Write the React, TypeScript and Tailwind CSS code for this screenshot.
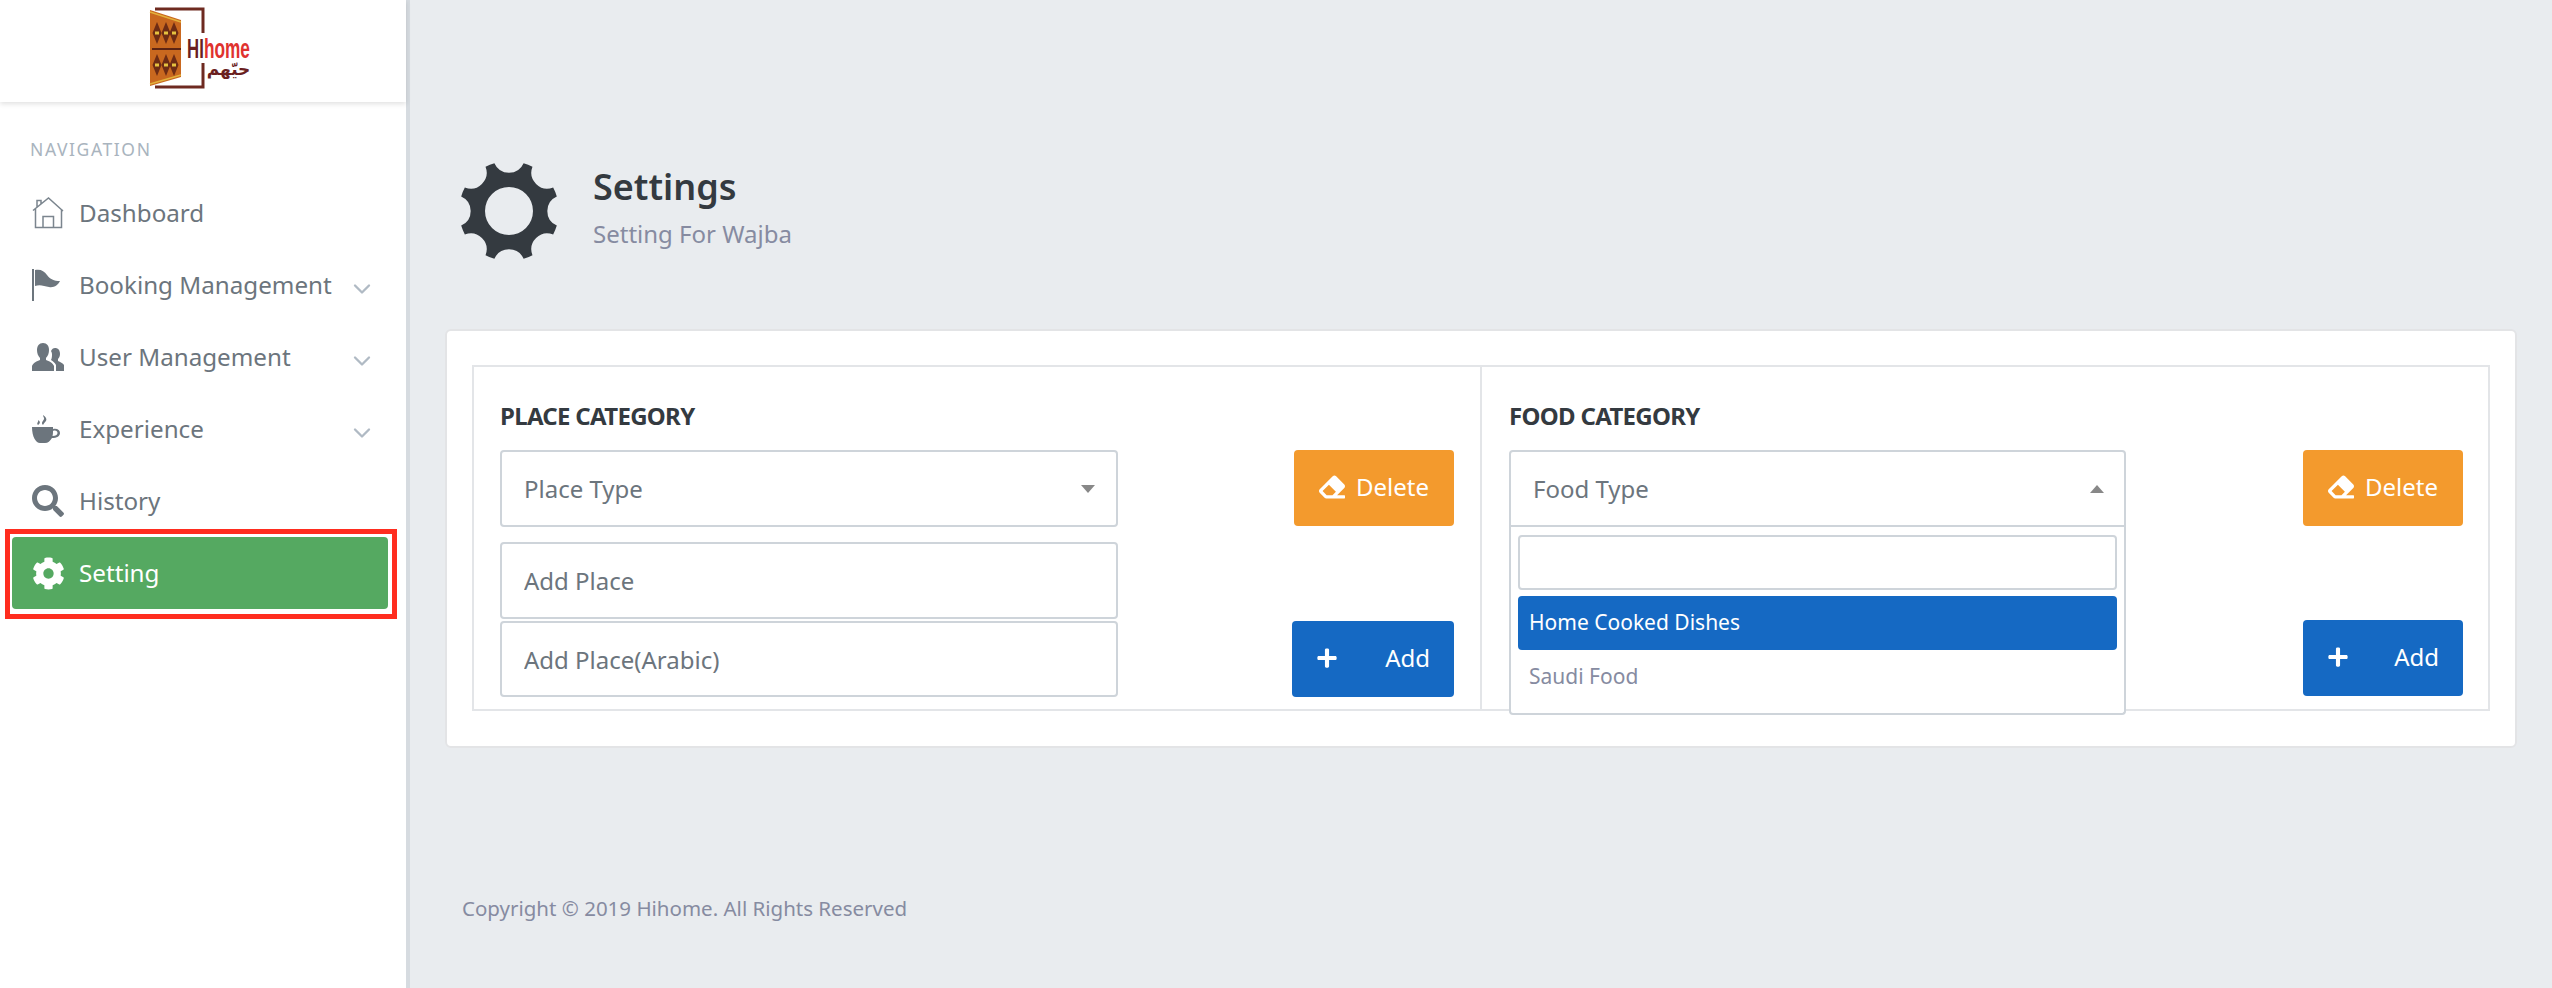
import React from 'react';
import { ChevronDown } from 'lucide-react';
import { FaCog, FaEraser, FaPlus, FaSearch } from 'react-icons/fa';

const gearPath = () => {
  const R = 50;
  const pt = (deg: number) => {
    const a = ((deg - 90) * Math.PI) / 180;
    return `${(R * Math.cos(a)).toFixed(2)} ${(R * Math.sin(a)).toFixed(2)}`;
  };
  let d = `M${pt(-17)}`;
  for (let i = 0; i < 8; i++) {
    const t = i * 45;
    d += ` A16 16 0 0 0 ${pt(t + 17)} A50 50 0 0 1 ${pt(t + 28)}`;
  }
  return `${d} Z M24 0 A24 24 0 1 0 -24 0 A24 24 0 1 0 24 0 Z`;
};

const HomeIcon = () => (
  <svg width="32" height="32" viewBox="0 0 32 32" fill="none" stroke="#7b858e" strokeWidth="1.5">
    <path d="M1 13.5 16.5 1 31 14M5 10V3.500h4v3.500M3.500 12v18.500h26V12M11 30.500V19.500h10.500v11" />
  </svg>
);

const FlagIcon = () => (
  <svg width="28" height="32" viewBox="0 0 28 32" fill="#6c757d">
    <rect x="0" y="0" width="2" height="32" />
    <path d="M3 1c6-1 9 1 12 5s7 6 13 6c-2 4-6 7-11 6s-9-3-14-1z" />
  </svg>
);

const UsersIcon = () => (
  <svg width="32" height="28" viewBox="0 0 32 28" fill="#6c757d">
    <path d="M11 0c4 0 6 3 6 7 0 3-1 6-3 8v2c3 1 7 3 8 6v5H0v-5c1-3 5-5 8-6v-2C6 13 5 10 5 7c0-4 2-7 6-7z" />
    <path d="M23 5c3 0 5 2 5 6 0 2-1 4-2 5v2c2 1 5 2 6 4v6h-8v-6c-1-2-3-4-5-5 1-2 1-4 1-6 0-1-.5-2-1-3 1-2 2-3 4-3z" />
  </svg>
);

const CupIcon = () => (
  <svg width="28" height="28" viewBox="0 0 28 28" fill="#6c757d">
    <path d="M0 12h21v2c4-1 7 1 7 4s-3 5-8 5c-2 3-4 5-7 5H8c-4 0-8-6-8-16zm21 4c0 2 0 3-.5 5 3 0 5-1 5-3s-2-3-4.500-2z" fillRule="evenodd" />
    <path d="M11 10c-3-3 2-5 1-7-.3-1-1-2-1-3 3 2 4 4 3 6-1 1-2 2-3 4zM6 10c-2-2 1-3 0-5 2 1 3 3 0 5z" />
  </svg>
);

// coordinates in the viewBox are the page's own pixels
const Logo = () => (
  <svg width="104" height="92" viewBox="148 0 104 92" className="ml-[148px]">
    <path d="M155 9h48v24M203 63v24h-48" fill="none" stroke="#6e2a20" strokeWidth="3" />
    <path d="M150 10 181 20v57L150 86z" fill="#c9681f" />
    <path d="M150 12 181 22M150 84 181 75" stroke="#e2b13c" strokeWidth="1.5" />
    <path d="M152 49h29" stroke="#5d2413" strokeWidth="2" />
    {[157, 166, 174].map(x => (
      <g key={x}>
        <path d={`M${x} 22l4.500 11-4.500 11-4.500-11z`} fill="#6e2c14" />
        <path d={`M${x} 54l4.500 11-4.500 11-4.500-11z`} fill="#6e2c14" />
        <rect x={x - 2} y="31.500" width="4" height="3" fill="#e6c23f" />
        <rect x={x - 2} y="63.500" width="4" height="3" fill="#e6c23f" />
      </g>
    ))}
    <text transform="translate(187 58) scale(0.6 1)" fontFamily="'Liberation Sans', sans-serif" fontWeight="700" fontSize="28" fill="#6b1f1f">HI</text>
    <text transform="translate(204 58) scale(0.615 1)" fontFamily="'Liberation Sans', sans-serif" fontWeight="700" fontSize="28" fill="#e0322f">home</text>
    <text x="228.500" y="75" textAnchor="middle" fontFamily="'DejaVu Sans', sans-serif" fontWeight="700" fontSize="17" fill="#6b1f1f">حيّهم</text>
  </svg>
);

const navItems = [
  { label: 'Dashboard', icon: <HomeIcon /> },
  { label: 'Booking Management', icon: <FlagIcon />, sub: true },
  { label: 'User Management', icon: <UsersIcon />, sub: true },
  { label: 'Experience', icon: <CupIcon />, sub: true },
  { label: 'History', icon: <FaSearch size={32} color="#6c757d" /> },
];

const Sidebar = () => (
  <aside className="w-[410px] shrink-0 bg-white border-r-4 border-[#d6dbe0]">
    <div className="h-[102px] flex items-start shadow-[0_2px_5px_rgba(0,0,0,0.12)]">
      <Logo />
    </div>
    <div className="pt-[36px] pl-[30px] h-[75px] text-[17.5px] leading-[22px] tracking-[1.6px] text-[#a9b4be]">NAVIGATION</div>
    {navItems.map(item => (
      <div key={item.label} className="h-[72px] flex items-center pl-[32px] text-[24.2px] text-[#6c757d]">
        <span className="w-[47px] shrink-0 flex">{item.icon}</span>
        <span className="flex-1">{item.label}</span>
        {item.sub && <ChevronDown size={28} color="#b0bac4" className="mr-[30px] mt-[8px]" />}
      </div>
    ))}
    {/* active item, red box is the annotation from the screenshot */}
    <div className="relative ml-[12px] w-[376px] h-[72px] flex items-center pl-[20px] rounded bg-[#55a961] text-[24.2px] text-white">
      <span className="w-[47px] shrink-0 flex"><FaCog size={33} /></span>
      <span>Setting</span>
      <div className="absolute -left-[7px] -right-[9px] -top-[8px] -bottom-[10px] border-[5px] border-[#ff2d1f]" />
    </div>
  </aside>
);

const Field = ({ placeholder, short }: { placeholder: string; short?: boolean }) => (
  <input
    placeholder={placeholder}
    className={`block w-full ${short ? 'h-[76px]' : 'h-[77px]'} px-[22px] bg-white border-2 border-[#ced4da] rounded text-[24px] text-[#6c757d] placeholder:text-[#6c757d] outline-none`}
  />
);

const DeleteBtn = () => (
  <button className="w-[160px] h-[76px] pb-[2px] flex items-center justify-center gap-[11px] rounded bg-[#f39a2d] text-white text-[24px]">
    <FaEraser size={26} />
    Delete
  </button>
);

const AddBtn = ({ wide }: { wide?: boolean }) => (
  <button className={`${wide ? 'w-[162px]' : 'w-[160px]'} h-[76px] pb-[2px] flex items-center justify-between px-[24px] rounded bg-[#1569c3] text-white text-[24px]`}>
    <FaPlus size={22} />
    Add
  </button>
);

const Settings = () => (
  <div className="grid grid-cols-[1008px_1fr] border-2 border-[#e3e5e8]">
    {/* Place */}
    <div className="pl-[26px] pr-[26px] pt-[34px] pb-[12px] border-r-2 border-[#e3e5e8]">
      <h3 className="h-[30px] mb-[19px] text-[24px] tracking-[-0.7px] leading-[30px] font-bold text-[#343a40]">PLACE CATEGORY</h3>
      <div className="flex justify-between">
        <div className="w-[618px] flex flex-col">
          <div className="h-[77px] mb-[15px] flex items-center justify-between pl-[22px] pr-[21px] border-2 border-[#ced4da] rounded text-[24px] text-[#6c757d]">
            Place Type
            <span className="w-0 h-0 border-x-[7px] border-x-transparent border-t-[8px] border-t-[#888]" />
          </div>
          <Field placeholder="Add Place" />
          <div className="h-[2px]" />
          <Field placeholder="Add Place(Arabic)" short />
        </div>
        <div className="flex flex-col items-end justify-between">
          <DeleteBtn />
          <AddBtn wide />
        </div>
      </div>
    </div>
    {/* Food */}
    <div className="pl-[27px] pr-[25px] pt-[34px] pb-[12px]">
      <h3 className="h-[30px] mb-[19px] text-[24px] tracking-[-0.7px] leading-[30px] font-bold text-[#343a40]">FOOD CATEGORY</h3>
      <div className="flex justify-between h-[246px]">
        <div className="relative w-[617px] h-[77px]">
          <div className="h-[77px] flex items-center justify-between pl-[22px] pr-[20px] border-2 border-[#ced4da] rounded-t text-[24px] text-[#6c757d]">
            Food Type
            <span className="w-0 h-0 border-x-[7px] border-x-transparent border-b-[8px] border-b-[#888]" />
          </div>
          <div className="absolute left-0 right-0 top-full h-[188px] px-[7px] pt-[8px] bg-white border-2 border-t-0 border-[#ced4da] rounded-b">
            <input className="block w-full h-[55px] border-2 border-[#ced4da] rounded outline-none" />
            <div className="mt-[6px] h-[54px] flex items-center px-[11px] rounded-sm bg-[#1569c3] text-white text-[21px]">Home Cooked Dishes</div>
            <div className="h-[54px] flex items-center px-[11px] text-[#868ba1] text-[21px]">Saudi Food</div>
          </div>
        </div>
        <div className="flex flex-col justify-between">
          <DeleteBtn />
          <AddBtn />
        </div>
      </div>
    </div>
  </div>
);

export default function App() {
  return (
    <div className="flex w-[2552px] h-[988px] overflow-hidden bg-[#e9ecef] font-['Noto_Sans',sans-serif]">
      <Sidebar />
      <main className="flex-1 min-w-0 pl-[35px] pr-[35px] pt-[163px]">
        <div className="flex items-start pl-[17px] h-[166px]">
          <svg width="96" height="96" viewBox="-48 -48 96 96" fill="#343a40" fillRule="evenodd" className="-ml-[1px]">
            <path d={gearPath()} />
          </svg>
          <div className="ml-[36px]">
            <h1 className="text-[36px] leading-[48px] font-semibold text-[#343a40]">Settings</h1>
            <p className="mt-[7px] text-[24px] leading-[32px] text-[#868ba1]">Setting For Wajba</p>
          </div>
        </div>
        <div className="h-[419px] px-[25px] pt-[34px] bg-white border-2 border-[#e3e4e6] rounded-md">
          <Settings />
        </div>
        <p className="mt-[145px] pl-[17px] text-[20.5px] leading-[30px] text-[#868ba1]">Copyright © 2019 Hihome. All Rights Reserved</p>
      </main>
    </div>
  );
}
